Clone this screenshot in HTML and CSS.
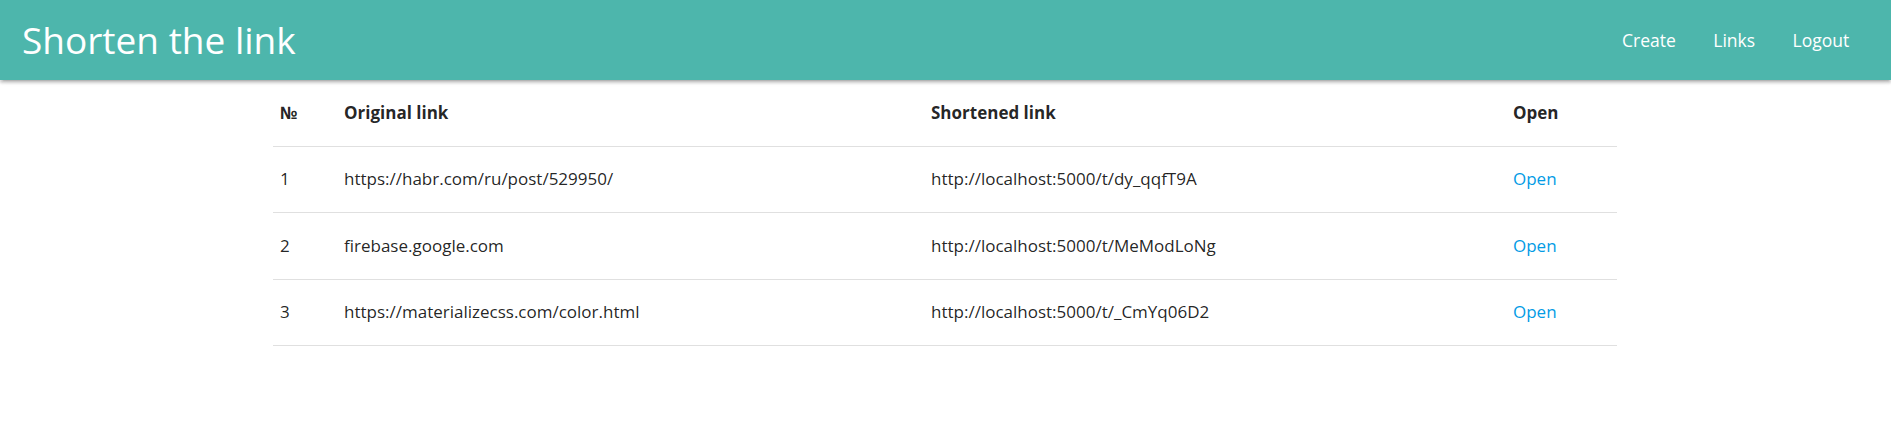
FILE: index.html
```html
<!DOCTYPE html>
<html lang="en">
<head>
<meta charset="utf-8">
<title>Shorten the link</title>
<link rel="stylesheet" href="styles.css">
</head>
<body>
<nav class="navbar">
  <div class="nav-wrapper">
    <a class="brand" href="#">Shorten the link</a>
    <ul class="nav-links">
      <li><a href="#">Create</a></li>
      <li><a href="#">Links</a></li>
      <li><a href="#">Logout</a></li>
    </ul>
  </div>
</nav>
<main class="container">
  <table class="links-table">
    <colgroup>
      <col class="c-num">
      <col class="c-orig">
      <col class="c-short">
      <col class="c-open">
    </colgroup>
    <thead>
      <tr><th>№</th><th>Original link</th><th>Shortened link</th><th>Open</th></tr>
    </thead>
    <tbody>
      <tr><td>1</td><td>https://habr.com/ru/post/529950/</td><td>http://localhost:5000/t/dy_qqfT9A</td><td><a href="#">Open</a></td></tr>
      <tr><td>2</td><td>firebase.google.com</td><td>http://localhost:5000/t/MeModLoNg</td><td><a href="#">Open</a></td></tr>
      <tr><td>3</td><td>https://materializecss.com/color.html</td><td>http://localhost:5000/t/_CmYq06D2</td><td><a href="#">Open</a></td></tr>
    </tbody>
  </table>
</main>
</body>
</html>
```
FILE: styles.css
```css
* { box-sizing: border-box; }
html, body { margin: 0; padding: 0; }
body {
  font-family: "Open Sans", "Noto Sans", sans-serif;
  font-size: 18.75px;
  line-height: 1.5;
  color: rgba(0,0,0,0.87);
  background: #fff;
}
a { text-decoration: none; }
.navbar {
  height: 80px;
  background: #4db6ac;
  box-shadow: 0 2.5px 2.5px 0 rgba(0,0,0,.14), 0 3.75px 1.25px -2.5px rgba(0,0,0,.12), 0 1.25px 6.25px 0 rgba(0,0,0,.2);
  position: relative;
  z-index: 1;
}
.nav-wrapper {
  height: 100%;
  display: flex;
  align-items: center;
  justify-content: space-between;
  padding: 0 23px 0 22px;
}
.brand {
  color: #fff;
  font-size: 37px;
  line-height: 80px;
}
.nav-links {
  list-style: none;
  margin: 0;
  padding: 0;
  display: flex;
}
.nav-links a {
  display: block;
  color: #fff;
  font-size: 17.5px;
  line-height: 80px;
  padding: 0 18.75px;
}
.container {
  width: 1344px;
  margin: 0 0 0 273px;
}
.links-table {
  width: 100%;
  border-collapse: collapse;
  table-layout: fixed;
  font-size: 17px;
}
.c-num { width: 64px; }
.c-orig { width: 587px; }
.c-short { width: 582px; }
.c-open { width: 111px; }
.links-table tr { border-bottom: 1.25px solid rgba(0,0,0,0.12); }
.links-table th, .links-table td {
  text-align: left;
  padding: 18.75px 7px;
  line-height: 28px;
  vertical-align: middle;
  white-space: nowrap;
}
.links-table th { font-weight: 700; }
.links-table td a { color: #039be5; }
```
